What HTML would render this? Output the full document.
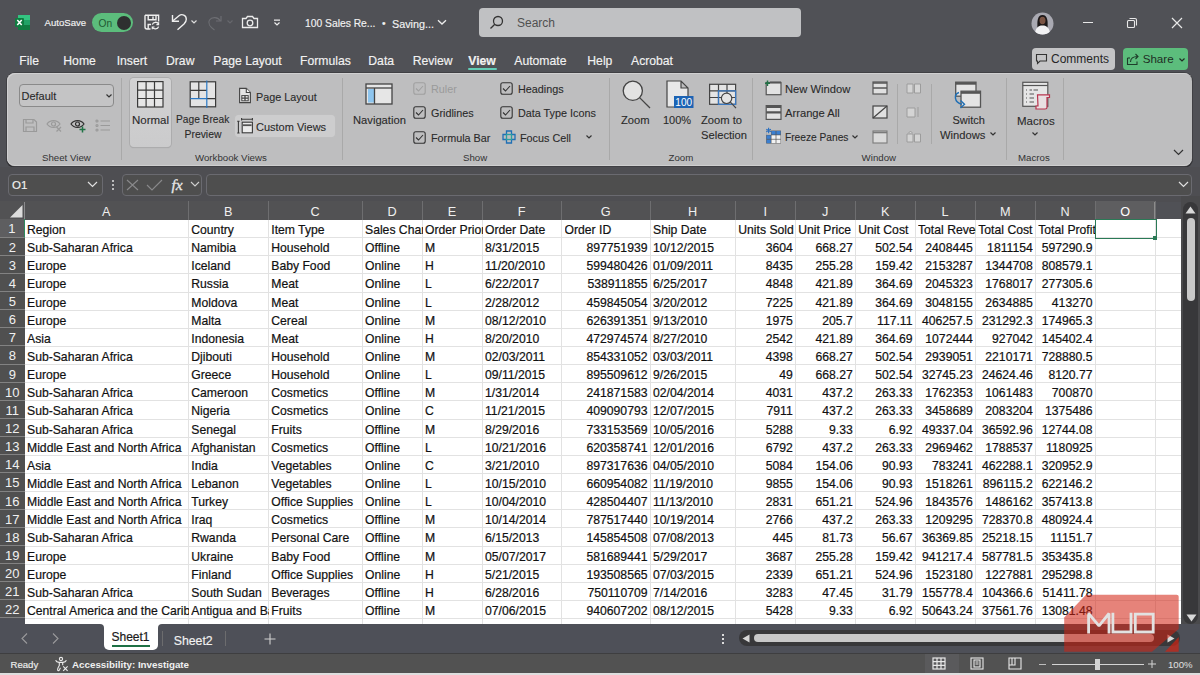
<!DOCTYPE html>
<html><head><meta charset="utf-8">
<style>
*{box-sizing:border-box;margin:0;padding:0}
html,body{width:1200px;height:675px;overflow:hidden;background:#505156;font-family:"Liberation Sans",sans-serif}
.a{position:absolute}
.t{position:absolute;white-space:nowrap;line-height:1}
/* title bar */
#title{left:0;top:0;width:1200px;height:46px;background:#505156}
.wt{color:#f2f2f2;-webkit-text-stroke:0.15px #f2f2f2}
/* ribbon */
#ribbon{left:7px;top:73px;width:1185px;height:93px;background:#bebebf;border-radius:8px;box-shadow:0 0 0 1px #404044, 0 1px 0 1px #2e2e30, inset 1px 1px 0 #d0d0d1, inset 0 -1px 0 #cfcfcf}
.rt{color:#2a2a2a;font-size:11px;-webkit-text-stroke:0.1px #2a2a2a}
.sep{position:absolute;width:1px;background:#a9a9a9}
.gl{color:#333;font-size:9.7px}
/* formula bar */
#fbar{left:0;top:167px;width:1200px;height:35px;background:#4e4e52}
.box{position:absolute;border:1px solid #6a6a70;border-radius:4px;background:#4e4e4e}
/* grid */
#gridbg{left:24.5px;top:219.25px;width:1156.5px;height:405px;background:#fff}
.hl{position:absolute;left:24.5px;width:1156.5px;height:1px;background:#e2e2e2}
.vl{position:absolute;top:219px;width:1px;height:405px;background:#e2e2e2}
.c{position:absolute;height:18.16px;font-size:12.2px;line-height:18px;color:#111;white-space:nowrap;overflow:hidden;padding-top:1.6px;-webkit-text-stroke:0.2px #111}
.c.r{text-align:right}
.ch{position:absolute;top:201px;height:18.5px;background:#525254;color:#f0f0f0;font-size:12.7px;line-height:18px;padding-top:1.6px;text-align:center;border-right:1px solid #6e6e70}
.ch.sel{background:#5e5e60;border-bottom:1.5px solid #2a7a56;color:#fff}
.rh{position:absolute;left:0;width:24.5px;height:18.16px;background:#505050;color:#f0f0f0;font-size:13px;line-height:18px;padding-top:1px;text-align:center;border-bottom:1px solid #828282}
.rh.sel{background:#5e5e60;border-right:1.5px solid #2d8a5c}
</style></head><body>
<div id="title" class="a"></div>

<!-- Excel logo -->
<svg class="a" style="left:14px;top:14px" width="17" height="17" viewBox="0 0 17 17">
  <rect x="4" y="1" width="12" height="15" rx="1" fill="#1f9d55"/>
  <rect x="4" y="1" width="12" height="5" fill="#33c481"/>
  <rect x="4" y="6" width="12" height="5" fill="#21a366"/>
  <rect x="4" y="11" width="12" height="5" fill="#107c41"/>
  <rect x="1" y="4" width="9" height="9" rx="1" fill="#107c41"/>
  <path d="M3.3 6 L7.7 11 M7.7 6 L3.3 11" stroke="#fff" stroke-width="1.5"/>
</svg>
<div class="t wt" style="left:44.5px;top:18px;font-size:9.6px">AutoSave</div>
<!-- toggle -->
<div class="a" style="left:92px;top:13px;width:41px;height:19px;border-radius:10px;background:#5cbd7c"></div>
<div class="a" style="left:116.5px;top:15.5px;width:14px;height:14px;border-radius:7px;background:#2e2f30"></div>
<div class="t" style="left:98.5px;top:19px;font-size:10.2px;color:#1f5a33">On</div>
<!-- save icon -->
<svg class="a" style="left:140px;top:10px" width="25" height="25" viewBox="140 10 25 25" fill="none" stroke="#efefef" stroke-width="1.4">
  <path d="M145 15.2 H158.6 V21.5"/>
  <path d="M145 15.2 V27 Q145 29 147 29 H150.5"/>
  <path d="M148.2 15.2 V19.8 H156 V15.2 M153 16.5 V19"/>
  <path d="M148.2 29 V24.5 H151"/>
  <path d="M152.3 24.6 A3.4 3.4 0 0 1 158.5 24 M158.6 26.6 A3.4 3.4 0 0 1 152.4 27.2" stroke-width="1.3"/>
  <path d="M158.6 22.3 V24.6 H156.4 M152.3 29.3 V27 H154.5" stroke-width="1.2"/>
</svg>
<!-- undo -->
<svg class="a" style="left:168px;top:10px" width="22" height="23" viewBox="168 10 22 23" fill="none" stroke="#efefef" stroke-width="1.4">
  <path d="M172.5 15 V21.2 H179"/>
  <path d="M173 20.8 L179 15.8 C182 13.3 186.3 15.3 186.3 19.2 C186.3 21.2 185.3 22.6 184 24 L177.5 29.8"/>
</svg>
<svg class="a" style="left:190px;top:19px" width="8" height="6" viewBox="0 0 8 6" fill="none" stroke="#dcdcdc" stroke-width="1.2"><path d="M1.5 1.5 L4 4 L6.5 1.5"/></svg>
<!-- redo disabled -->
<svg class="a" style="left:205px;top:13px" width="18" height="18" viewBox="0 0 18 18" fill="none" stroke="#6c6d72" stroke-width="1.2">
  <path d="M16 3 V8 H11"/><path d="M15.5 8 C13 4 7 3.5 4.5 7 C2.5 10 5 14 9.5 17"/>
</svg>
<svg class="a" style="left:226px;top:19px" width="8" height="6" viewBox="0 0 8 6" fill="none" stroke="#66676c" stroke-width="1.2"><path d="M1.5 1.5 L4 4 L6.5 1.5"/></svg>
<!-- camera -->
<svg class="a" style="left:241px;top:15px" width="18" height="14" viewBox="0 0 18 14" fill="none" stroke="#ececec" stroke-width="1.3">
  <path d="M1.5 3.5 H5 L6.5 1.5 H11.5 L13 3.5 H16.5 V12.5 H1.5 Z"/><circle cx="9" cy="8" r="2.8"/>
</svg>
<svg class="a" style="left:273px;top:19px" width="8" height="8" viewBox="0 0 8 8" fill="none" stroke="#ececec" stroke-width="1.2"><path d="M1 1.2 H7 M1.5 3.5 L4 6 L6.5 3.5"/></svg>
<div class="t wt" style="left:305px;top:18.5px;font-size:10.3px">100 Sales Re...</div>
<div class="t wt" style="left:382px;top:18.5px;font-size:10.3px">•</div>
<div class="t wt" style="left:392px;top:18.5px;font-size:10.8px">Saving...</div>
<svg class="a" style="left:437px;top:19px" width="10" height="7" viewBox="0 0 10 7" fill="none" stroke="#ececec" stroke-width="1.3"><path d="M1 1.2 L5 5 L9 1.2"/></svg>
<!-- search -->
<div class="a" style="left:479px;top:8px;width:322px;height:29px;background:#c0c1c3;border-radius:4px"></div>
<svg class="a" style="left:489px;top:15px" width="15" height="15" viewBox="0 0 15 15" fill="none" stroke="#333" stroke-width="1.3">
  <circle cx="9" cy="6" r="4.5"/><path d="M5.8 9.2 L1.5 13.5"/>
</svg>
<div class="t" style="left:517px;top:17px;font-size:12px;color:#505050">Search</div>
<!-- avatar -->
<svg class="a" style="left:1031px;top:11.5px" width="23" height="23" viewBox="0 0 23 23">
  <defs><clipPath id="av"><circle cx="11.5" cy="11.5" r="11"/></clipPath></defs>
  <g clip-path="url(#av)">
    <rect width="23" height="23" fill="#a9a9b2"/>
    <path d="M6.5 16 C6 9 6.5 3 11.5 3 C16.5 3 17 9 16.5 16 Z" fill="#1c1819"/>
    <ellipse cx="11.5" cy="8.5" rx="3" ry="3.8" fill="#7a5444"/>
    <path d="M4 23 C4 16 7 13.5 11.5 13.5 C16 13.5 19 16 19 23 Z" fill="#f2f2f4"/>
  </g>
</svg>
<!-- window controls -->
<div class="a" style="left:1083px;top:22px;width:10px;height:1px;background:#e8e8e8"></div>
<svg class="a" style="left:1126px;top:17px" width="12" height="12" viewBox="0 0 12 12" fill="none" stroke="#e8e8e8" stroke-width="1.1">
  <rect x="1.5" y="3.5" width="7" height="7" rx="1"/><path d="M3.5 1.5 H9 a1.5 1.5 0 0 1 1.5 1.5 V8.5"/>
</svg>
<svg class="a" style="left:1171px;top:17px" width="12" height="12" viewBox="0 0 12 12" fill="none" stroke="#e8e8e8" stroke-width="1.2"><path d="M1 1 L11 11 M11 1 L1 11"/></svg>

<!-- menu tabs -->
<div class="t wt" style="left:19.3px;top:55px;font-size:12.2px">File</div>
<div class="t wt" style="left:63.3px;top:55px;font-size:12.2px">Home</div>
<div class="t wt" style="left:116.7px;top:55px;font-size:12.2px">Insert</div>
<div class="t wt" style="left:166px;top:55px;font-size:12.2px">Draw</div>
<div class="t wt" style="left:213.3px;top:55px;font-size:12.2px">Page Layout</div>
<div class="t wt" style="left:300px;top:55px;font-size:12.2px">Formulas</div>
<div class="t wt" style="left:368.3px;top:55px;font-size:12.2px">Data</div>
<div class="t wt" style="left:412.7px;top:55px;font-size:12.2px">Review</div>
<div class="t wt" style="left:468.3px;top:55px;font-size:12.2px;font-weight:bold">View</div>
<div class="a" style="left:468px;top:68px;width:29px;height:2px;background:#62cdb6;border-radius:1px"></div>
<div class="t wt" style="left:514.3px;top:55px;font-size:12.2px">Automate</div>
<div class="t wt" style="left:587.3px;top:55px;font-size:12.2px">Help</div>
<div class="t wt" style="left:631px;top:55px;font-size:12.2px">Acrobat</div>
<!-- comments / share -->
<div class="a" style="left:1032px;top:48px;width:83px;height:22px;background:#c4c4c6;border-radius:4px"></div>
<svg class="a" style="left:1035px;top:53px" width="13" height="12" viewBox="0 0 13 12" fill="none" stroke="#333" stroke-width="1.1"><path d="M1.5 1.5 H11.5 V8 H5 L2.5 10.5 V8 H1.5 Z"/></svg>
<div class="t" style="left:1051px;top:53px;font-size:12px;color:#262626">Comments</div>
<div class="a" style="left:1123px;top:48px;width:65px;height:22px;background:#5cbd7c;border-radius:4px"></div>
<svg class="a" style="left:1126px;top:52px" width="14" height="14" viewBox="0 0 14 14" fill="none" stroke="#1e3d2a" stroke-width="1.1"><path d="M1.5 6 V12.5 H11 V9.5"/><path d="M1.5 6 H4"/><path d="M4.5 10 C4.5 6.5 7 4.5 11.5 4.5 M9.5 2 L12 4.5 L9.5 7"/></svg>
<div class="t" style="left:1142.7px;top:53px;font-size:11.6px;color:#1e2e24">Share</div>
<svg class="a" style="left:1178px;top:57px" width="8" height="6" viewBox="0 0 8 6" fill="none" stroke="#1e2e24" stroke-width="1.2"><path d="M1.5 1.5 L4 4 L6.5 1.5"/></svg>

<!-- ribbon -->
<div id="ribbon" class="a"></div>
<!-- sheet view group -->
<div class="a" style="left:19px;top:84px;width:95px;height:22.5px;border:1px solid #8a8a8a;border-radius:4px;background:#c4c4c5"></div>
<div class="t rt" style="left:21.5px;top:91px;font-size:11px">Default</div>
<svg class="a" style="left:105px;top:93px" width="8" height="6" viewBox="0 0 8 6" fill="none" stroke="#333" stroke-width="1.2"><path d="M1.5 1.5 L4 4 L6.5 1.5"/></svg>
<svg class="a" style="left:22px;top:118px" width="16" height="15" viewBox="0 0 16 15" fill="none" stroke="#9a9a9a" stroke-width="1.2"><path d="M1.5 1.5 H12 L14.5 4 V13.5 H1.5 Z"/><path d="M4 1.5 V5 H11 V1.5 M4 13.5 V9 H12 V13.5"/></svg>
<svg class="a" style="left:46px;top:118px" width="17" height="15" viewBox="0 0 17 15" fill="none" stroke="#9a9a9a" stroke-width="1.2"><path d="M1 6 C4 1.5 11 1.5 14 6 C11 10.5 4 10.5 1 6 Z"/><circle cx="7.5" cy="6" r="2"/><path d="M10.5 9 L15 13.5 M15 9 L10.5 13.5"/></svg>
<svg class="a" style="left:70px;top:118px" width="17" height="15" viewBox="0 0 17 15" fill="none" stroke="#2f2f2f" stroke-width="1.2"><path d="M1 6 C4 1.5 11 1.5 14 6 C11 10.5 4 10.5 1 6 Z"/><circle cx="7.5" cy="6" r="2"/><path d="M12.5 8.5 V14.5 M9.5 11.5 H15.5" stroke="#217346" stroke-width="1.5"/></svg>
<svg class="a" style="left:95px;top:118px" width="16" height="15" viewBox="0 0 16 15" fill="none" stroke="#9a9a9a" stroke-width="1.2"><path d="M5.5 3 H15 M5.5 7.5 H15 M5.5 12 H15"/><circle cx="2" cy="3" r="1"/><circle cx="2" cy="7.5" r="1"/><circle cx="2" cy="12" r="1"/></svg>
<div class="t gl" style="left:42px;top:153px">Sheet View</div>
<div class="sep" style="left:121px;top:78px;height:82px"></div>

<!-- workbook views -->
<div class="a" style="left:130px;top:77.5px;width:40.5px;height:69.5px;background:linear-gradient(#d2d2d3,#cbcbcc);border-radius:4px;box-shadow:0 0 0 1px #acacad, 0 1px 1px #a0a0a0"></div>
<svg class="a" style="left:135px;top:79px" width="31" height="31" viewBox="135 79 31 31" fill="none" stroke="#3a3a3a" stroke-width="1.2">
  <rect x="137.6" y="81.6" width="25.4" height="25.4" fill="#e6e6e6"/>
  <path d="M146.1 81.6 V107 M154.5 81.6 V107 M137.6 90.1 H163 M137.6 98.5 H163"/>
</svg>
<div class="t rt" style="left:132px;top:115px;font-size:11.5px">Normal</div>
<svg class="a" style="left:187px;top:79px" width="32" height="31" viewBox="187 79 32 31" fill="none" stroke="#3a3a3a" stroke-width="1.2">
  <rect x="190.2" y="81.8" width="25.4" height="25" fill="#e4e4e4"/>
  <path d="M198.8 81.8 V98.6 M190.2 90.4 H206.8 M206.8 98.6 H215.6"/>
  <path d="M190.2 98.6 H206.8 M206.8 80.5 V108" stroke="#2a78c4" stroke-width="1.2"/>
</svg>
<div class="t rt" style="left:176px;top:115px;font-size:10.2px">Page Break</div>
<div class="t rt" style="left:184.5px;top:130px;font-size:10.4px">Preview</div>
<svg class="a" style="left:237px;top:86px" width="16" height="19" viewBox="237 86 16 19" fill="none" stroke="#444" stroke-width="1.1">
  <path d="M239.6 88.4 H246.3 L250.4 92.5 V102.6 H239.6 Z" fill="#e4e4e4"/>
  <path d="M246.3 88.4 V92.5 H250.4" fill="#f2f2f2"/>
  <rect x="241.8" y="95.6" width="6.4" height="5.2" fill="#f0f0f0" stroke-width="1"/>
  <path d="M245 95.6 V100.8 M241.8 98.2 H248.2" stroke-width="1.3"/>
</svg>
<div class="t rt" style="left:256px;top:92px;font-size:10.8px">Page Layout</div>
<div class="a" style="left:234.5px;top:114.5px;width:100.5px;height:22.5px;background:#cdcdce;border-radius:4px;box-shadow:0 0 1px #c8c8c8"></div>
<svg class="a" style="left:235px;top:116px" width="20" height="19" viewBox="235 116 20 19" fill="none" stroke="#3a3a3a" stroke-width="1.1">
  <path d="M238.4 121.3 V133 M237.2 121.3 H239.6 M237.2 133 H239.6"/>
  <path d="M241.6 119.3 H252.4 M241.6 118.1 V120.5 M252.4 118.1 V120.5"/>
  <rect x="242.2" y="122.2" width="10.2" height="10.6" fill="#ececec"/>
  <path d="M243 125.2 H251.6" stroke-width="1.8" stroke="#555"/>
</svg>
<div class="t rt" style="left:256px;top:122px;font-size:11px">Custom Views</div>
<div class="t gl" style="left:195px;top:153px">Workbook Views</div>
<div class="sep" style="left:342px;top:78px;height:82px"></div>

<!-- navigation -->
<svg class="a" style="left:365px;top:83px" width="28" height="22" viewBox="0 0 28 22" fill="#e6e6e6" stroke="#444" stroke-width="1.3"><rect x="1" y="1" width="26" height="20"/><path d="M1 5 H27"/><rect x="3" y="6" width="6" height="13.5" fill="#8ec5ee" stroke="none"/><path d="M9.5 5 V21"/></svg>
<div class="t rt" style="left:353px;top:115px;font-size:11.2px">Navigation</div>

<!-- show group -->
<svg class="a" style="left:413px;top:82px" width="13" height="13" viewBox="0 0 13 13" fill="none" stroke="#a0a0a0" stroke-width="1.1"><rect x="0.8" y="0.8" width="11.4" height="11.4" rx="2"/><path d="M3 6.5 L5.5 9 L10 4"/></svg>
<div class="t" style="left:431px;top:84px;font-size:10.8px;color:#9a9a9a">Ruler</div>
<svg class="a" style="left:413px;top:106px" width="13" height="13" viewBox="0 0 13 13" fill="none" stroke="#333" stroke-width="1.1"><rect x="0.8" y="0.8" width="11.4" height="11.4" rx="2"/><path d="M3 6.5 L5.5 9 L10 4"/></svg>
<div class="t rt" style="left:431px;top:108px;font-size:10.8px">Gridlines</div>
<svg class="a" style="left:413px;top:131px" width="13" height="13" viewBox="0 0 13 13" fill="none" stroke="#333" stroke-width="1.1"><rect x="0.8" y="0.8" width="11.4" height="11.4" rx="2"/><path d="M3 6.5 L5.5 9 L10 4"/></svg>
<div class="t rt" style="left:431px;top:133px;font-size:10.8px">Formula Bar</div>
<svg class="a" style="left:500px;top:82px" width="13" height="13" viewBox="0 0 13 13" fill="none" stroke="#333" stroke-width="1.1"><rect x="0.8" y="0.8" width="11.4" height="11.4" rx="2"/><path d="M3 6.5 L5.5 9 L10 4"/></svg>
<div class="t rt" style="left:518px;top:84px;font-size:10.8px">Headings</div>
<svg class="a" style="left:500px;top:106px" width="13" height="13" viewBox="0 0 13 13" fill="none" stroke="#333" stroke-width="1.1"><rect x="0.8" y="0.8" width="11.4" height="11.4" rx="2"/><path d="M3 6.5 L5.5 9 L10 4"/></svg>
<div class="t rt" style="left:518px;top:108px;font-size:10.8px">Data Type Icons</div>
<svg class="a" style="left:502px;top:130px" width="14" height="14" viewBox="0 0 14 14" fill="none" stroke="#1f6fb5" stroke-width="1.3"><path d="M4.5 1 H9.5 V4.5 H13 V9.5 H9.5 V13 H4.5 V9.5 H1 V4.5 H4.5 Z"/><rect x="4.5" y="4.5" width="5" height="5" stroke="#2aa0a0"/></svg>
<div class="t rt" style="left:520px;top:133px;font-size:10.8px">Focus Cell</div>
<svg class="a" style="left:585px;top:134px" width="8" height="6" viewBox="0 0 8 6" fill="none" stroke="#333" stroke-width="1.2"><path d="M1.5 1.5 L4 4 L6.5 1.5"/></svg>
<div class="t gl" style="left:463px;top:153px">Show</div>
<div class="sep" style="left:609px;top:78px;height:82px"></div>

<!-- zoom group -->
<svg class="a" style="left:615px;top:76px" width="40" height="36" viewBox="615 76 40 36" fill="#e2e2e2" stroke="#444" stroke-width="1.3"><circle cx="632.8" cy="90.8" r="9.6"/><path d="M639.6 97.6 L650 108" fill="none"/></svg>
<div class="t rt" style="left:621px;top:115px;font-size:11.2px">Zoom</div>
<svg class="a" style="left:665px;top:80px" width="29" height="29" viewBox="0 0 29 29" fill="#e8e8e8" stroke="#444" stroke-width="1.2"><path d="M2 1 H16 L23 8 V27 H2 Z M16 1 V8 H23"/><rect x="9" y="16" width="19.5" height="12" fill="#1c63b4" stroke="none"/><text x="18.7" y="26" font-family="Liberation Sans" font-size="10" fill="#fff" stroke="none" text-anchor="middle">100</text></svg>
<div class="t rt" style="left:663px;top:115px;font-size:11px">100%</div>
<svg class="a" style="left:705px;top:80px" width="36" height="32" viewBox="705 80 36 32" fill="none" stroke="#444" stroke-width="1.2">
  <rect x="709.6" y="84.3" width="26" height="20" fill="#e4e4e4"/>
  <path d="M709.6 90.8 H735.6 M709.6 97.5 H735.6 M718.5 84.3 V104.3 M727 84.3 V104.3"/>
  <path d="M718.5 90.8 H735.6 V104.3 H718.5 Z" stroke="#3a78c0" stroke-width="1.3"/>
  <circle cx="726.6" cy="98.3" r="5.2" fill="#e4e4e4"/>
  <path d="M730.4 102.1 L736 108.2"/>
</svg>
<div class="t rt" style="left:701px;top:115px;font-size:11.2px">Zoom to</div>
<div class="t rt" style="left:701px;top:130px;font-size:11.2px">Selection</div>
<div class="t gl" style="left:668.5px;top:153px">Zoom</div>
<div class="sep" style="left:752px;top:78px;height:82px"></div>

<!-- window group -->
<svg class="a" style="left:763px;top:79px" width="22" height="18" viewBox="763 79 22 18" fill="none" stroke="#555" stroke-width="1.2">
  <rect x="766.2" y="82.5" width="14.8" height="12.2" fill="#e2e2e2"/>
  <path d="M770 82.5 H781" stroke-width="2"/>
  <path d="M767.5 80.5 V86 M765 83.2 H770" stroke="#217346" stroke-width="1.4"/>
</svg>
<div class="t rt" style="left:785px;top:84px;font-size:11.2px">New Window</div>
<svg class="a" style="left:763px;top:103px" width="22" height="18" viewBox="763 103 22 18" fill="none" stroke="#555" stroke-width="1.2">
  <rect x="766.2" y="105.6" width="14.8" height="13.8" fill="#e2e2e2"/>
  <path d="M766.2 107 H781 M766.2 112.3 H781" stroke-width="2.2"/>
</svg>
<div class="t rt" style="left:785px;top:108px;font-size:11.2px">Arrange All</div>
<svg class="a" style="left:763px;top:127px" width="22" height="19" viewBox="763 127 22 19">
  <rect x="766.2" y="130.6" width="14.700000000000001" height="12.899999999999999" fill="#555"/>
  <rect x="766.2" y="130.6" width="4.9" height="4.3" fill="#bebebf"/>
  <rect x="771.45" y="130.95" width="4.20" height="3.60" fill="#3b7fd0"/><rect x="776.35" y="130.95" width="4.20" height="3.60" fill="#3b7fd0"/><rect x="766.55" y="135.25" width="4.20" height="3.60" fill="#3b7fd0"/><rect x="771.45" y="135.25" width="4.20" height="3.60" fill="#f2f2f2"/><rect x="776.35" y="135.25" width="4.20" height="3.60" fill="#f2f2f2"/><rect x="766.55" y="139.55" width="4.20" height="3.60" fill="#3b7fd0"/><rect x="771.45" y="139.55" width="4.20" height="3.60" fill="#f2f2f2"/><rect x="776.35" y="139.55" width="4.20" height="3.60" fill="#f2f2f2"/>
  <path d="M768.6 127.8 V133.2 M766.3 129.2 L770.9 131.8 M770.9 129.2 L766.3 131.8" stroke="#2a6fc0" stroke-width="1.1"/>
</svg>
<div class="t rt" style="left:785px;top:133px;font-size:10.2px">Freeze Panes</div>
<svg class="a" style="left:851px;top:134px" width="8" height="6" viewBox="0 0 8 6" fill="none" stroke="#333" stroke-width="1.2"><path d="M1.5 1.5 L4 4 L6.5 1.5"/></svg>
<svg class="a" style="left:872px;top:81px" width="16" height="14" viewBox="0 0 16 14" fill="#e0e0e0" stroke="#555" stroke-width="1.2"><rect x="1" y="1" width="14" height="12"/><path d="M1 2 H15 M1 7 H15" stroke-width="1.7"/></svg>
<svg class="a" style="left:872px;top:105px" width="16" height="14" viewBox="0 0 16 14" fill="#e0e0e0" stroke="#444" stroke-width="1.2"><rect x="1" y="1" width="14" height="12"/><path d="M1 13 L15 1"/></svg>
<svg class="a" style="left:872px;top:130px" width="16" height="14" viewBox="0 0 16 14" fill="#dadada" stroke="#7a7a7a" stroke-width="1.1"><rect x="1" y="1" width="14" height="12"/><path d="M1 2.5 H15" stroke-width="1.6"/></svg>
<div class="sep" style="left:897px;top:84px;height:60px"></div>
<svg class="a" style="left:906px;top:82px" width="16" height="12" viewBox="0 0 16 12" fill="#d4d4d4" stroke="#9c9c9c" stroke-width="1"><path d="M1 2 H7 V11 H1 Z M8.5 2 H14.5 V11 H8.5 Z"/></svg>
<svg class="a" style="left:906px;top:106px" width="16" height="12" viewBox="0 0 16 12" fill="#d4d4d4" stroke="#9c9c9c" stroke-width="1"><path d="M1 2 H9 V11 H1 Z M12 1 V11"/></svg>
<svg class="a" style="left:906px;top:130px" width="16" height="13" viewBox="0 0 16 13" fill="#d4d4d4" stroke="#9c9c9c" stroke-width="1"><path d="M1 4 H7 V12 H1 Z M8.5 4 H14.5 V12 H8.5 Z M3 3 C3 1 6 1 6 3"/></svg>
<div class="sep" style="left:931px;top:84px;height:60px"></div>
<svg class="a" style="left:950px;top:78px" width="36" height="34" viewBox="950 78 36 34">
  <rect x="955.7" y="82.2" width="20.3" height="14" fill="#e4e4e4" stroke="#555" stroke-width="1.3"/>
  <path d="M955.7 83.5 H976" stroke="#555" stroke-width="2.4"/>
  <rect x="961" y="91.2" width="19.5" height="16" fill="#e4e4e4" stroke="#555" stroke-width="1.3"/>
  <path d="M961 92.6 H980.5" stroke="#555" stroke-width="2.4"/>
  <path d="M959 92.5 C954 94 953.5 102 962 104.3" fill="none" stroke="#1f6fb5" stroke-width="1.4"/>
  <path d="M960.5 100.5 L964.5 104.3 L960.5 108" fill="none" stroke="#1f6fb5" stroke-width="1.4"/>
</svg>
<div class="t rt" style="left:952.5px;top:115px;font-size:11px">Switch</div>
<div class="t rt" style="left:940px;top:130px;font-size:11.2px">Windows</div>
<svg class="a" style="left:989px;top:131px" width="8" height="6" viewBox="0 0 8 6" fill="none" stroke="#333" stroke-width="1.2"><path d="M1.5 1.5 L4 4 L6.5 1.5"/></svg>
<div class="t gl" style="left:861.6px;top:153px">Window</div>
<div class="sep" style="left:1006px;top:78px;height:82px"></div>

<!-- macros -->
<svg class="a" style="left:1020px;top:80px" width="33" height="31" viewBox="1020 80 33 31">
  <rect x="1022.8" y="82.3" width="25" height="24" fill="#e6e6e6" stroke="#555" stroke-width="1.2"/>
  <path d="M1022.8 85.5 H1047.8" stroke="#555" stroke-width="1.2"/>
  <g stroke="#555" stroke-width="1.2"><path d="M1026 90 H1027 M1029.5 90 H1032 M1033.5 90 H1038 M1026 94 H1027 M1029.5 94 H1034 M1026 98 H1027 M1029.5 98 H1034 M1026 102 H1027 M1029.5 102 H1034"/></g>
  <path d="M1037.5 94.8 H1049.5 V97.5 H1047 V107.5 C1047 108.5 1046 109 1045 109 H1036 V106 H1038 Z" fill="#e8e0e2" stroke="#b8344e" stroke-width="1.2"/>
</svg>
<div class="t rt" style="left:1017px;top:116px;font-size:11.5px">Macros</div>
<svg class="a" style="left:1031px;top:131px" width="8" height="6" viewBox="0 0 8 6" fill="none" stroke="#333" stroke-width="1.2"><path d="M1.5 1.5 L4 4 L6.5 1.5"/></svg>
<div class="t gl" style="left:1018px;top:153px">Macros</div>
<div class="sep" style="left:1063px;top:78px;height:82px"></div>
<svg class="a" style="left:1173px;top:149px" width="11" height="7" viewBox="0 0 11 7" fill="none" stroke="#333" stroke-width="1.2"><path d="M1 1 L5.5 5.5 L10 1"/></svg>

<!-- formula bar -->
<div id="fbar" class="a"></div>
<div class="box" style="left:7.5px;top:174px;width:95px;height:21.5px"></div>
<div class="t wt" style="left:12px;top:179.5px;font-size:11.5px">O1</div>
<svg class="a" style="left:87px;top:181px" width="11" height="7" viewBox="0 0 11 7" fill="none" stroke="#e0e0e0" stroke-width="1.2"><path d="M1 1 L5.5 5.5 L10 1"/></svg>
<div class="a" style="left:111.5px;top:180px;width:2px;height:2px;background:#e0e0e0;border-radius:1px"></div>
<div class="a" style="left:111.5px;top:184px;width:2px;height:2px;background:#e0e0e0;border-radius:1px"></div>
<div class="a" style="left:111.5px;top:188px;width:2px;height:2px;background:#e0e0e0;border-radius:1px"></div>
<div class="box" style="left:121.5px;top:174px;width:80px;height:21.5px"></div>
<svg class="a" style="left:126px;top:179px" width="13" height="12" viewBox="0 0 13 12" fill="none" stroke="#8a8a8c" stroke-width="1.1"><path d="M1 1 L12 11 M12 1 L1 11"/></svg>
<svg class="a" style="left:146px;top:179px" width="17" height="12" viewBox="0 0 17 12" fill="none" stroke="#8a8a8c" stroke-width="1.1"><path d="M1 6 L6 11 L16 1"/></svg>
<div class="t" style="left:171.5px;top:176.5px;font-size:15.5px;color:#e8e8e8;font-family:'Liberation Serif',serif;font-style:italic;-webkit-text-stroke:0.3px #e8e8e8">fx</div>
<svg class="a" style="left:190px;top:181px" width="10" height="7" viewBox="0 0 10 7" fill="none" stroke="#d0d0d0" stroke-width="1.1"><path d="M1 1 L5 5 L9 1"/></svg>
<div class="box" style="left:205.5px;top:174px;width:986.5px;height:21.5px"></div>
<svg class="a" style="left:1178px;top:181px" width="11" height="7" viewBox="0 0 11 7" fill="none" stroke="#e0e0e0" stroke-width="1.2"><path d="M1 1 L5.5 5.5 L10 1"/></svg>

<!-- grid -->
<div id="gridbg" class="a"></div>
<div class="hl" style="top:237px"></div>
<div class="hl" style="top:255px"></div>
<div class="hl" style="top:273px"></div>
<div class="hl" style="top:292px"></div>
<div class="hl" style="top:310px"></div>
<div class="hl" style="top:328px"></div>
<div class="hl" style="top:346px"></div>
<div class="hl" style="top:364px"></div>
<div class="hl" style="top:382px"></div>
<div class="hl" style="top:400px"></div>
<div class="hl" style="top:419px"></div>
<div class="hl" style="top:437px"></div>
<div class="hl" style="top:455px"></div>
<div class="hl" style="top:473px"></div>
<div class="hl" style="top:491px"></div>
<div class="hl" style="top:509px"></div>
<div class="hl" style="top:527px"></div>
<div class="hl" style="top:546px"></div>
<div class="hl" style="top:564px"></div>
<div class="hl" style="top:582px"></div>
<div class="hl" style="top:600px"></div>
<div class="hl" style="top:618px"></div>
<div class="hl" style="top:636px"></div>
<div class="vl" style="left:188px"></div>
<div class="vl" style="left:268px"></div>
<div class="vl" style="left:362px"></div>
<div class="vl" style="left:422px"></div>
<div class="vl" style="left:482px"></div>
<div class="vl" style="left:561px"></div>
<div class="vl" style="left:650px"></div>
<div class="vl" style="left:735px"></div>
<div class="vl" style="left:795px"></div>
<div class="vl" style="left:855px"></div>
<div class="vl" style="left:915px"></div>
<div class="vl" style="left:975px"></div>
<div class="vl" style="left:1035px"></div>
<div class="vl" style="left:1095px"></div>
<div class="vl" style="left:1155px"></div>
<div class="c" style="left:27px;top:219.4px;width:161.75px">Region</div>
<div class="c" style="left:191.25px;top:219.4px;width:77.5px">Country</div>
<div class="c" style="left:271.25px;top:219.4px;width:91.25px">Item Type</div>
<div class="c" style="left:365px;top:219.4px;width:57.5px">Sales Channel</div>
<div class="c" style="left:425px;top:219.4px;width:57.5px">Order Priority</div>
<div class="c" style="left:485px;top:219.4px;width:77px">Order Date</div>
<div class="c" style="left:564.5px;top:219.4px;width:86px">Order ID</div>
<div class="c" style="left:653px;top:219.4px;width:82.75px">Ship Date</div>
<div class="c" style="left:738.25px;top:219.4px;width:57.5px">Units Sold</div>
<div class="c" style="left:798.25px;top:219.4px;width:57.5px">Unit Price</div>
<div class="c" style="left:858.25px;top:219.4px;width:57.25px">Unit Cost</div>
<div class="c" style="left:918px;top:219.4px;width:57.75px">Total Revenue</div>
<div class="c" style="left:978.25px;top:219.4px;width:57.5px">Total Cost</div>
<div class="c" style="left:1038.25px;top:219.4px;width:57.25px">Total Profit</div>
<div class="c" style="left:27px;top:237.54px;width:161.75px">Sub-Saharan Africa</div>
<div class="c" style="left:191.25px;top:237.54px;width:77.5px">Namibia</div>
<div class="c" style="left:271.25px;top:237.54px;width:91.25px">Household</div>
<div class="c" style="left:365px;top:237.54px;width:57.5px">Offline</div>
<div class="c" style="left:425px;top:237.54px;width:57.5px">M</div>
<div class="c" style="left:485px;top:237.54px;width:77px">8/31/2015</div>
<div class="c r" style="left:562px;top:237.54px;width:85.5px">897751939</div>
<div class="c" style="left:653px;top:237.54px;width:82.75px">10/12/2015</div>
<div class="c r" style="left:735.75px;top:237.54px;width:57px">3604</div>
<div class="c r" style="left:795.75px;top:237.54px;width:57px">668.27</div>
<div class="c r" style="left:855.75px;top:237.54px;width:56.75px">502.54</div>
<div class="c r" style="left:915.5px;top:237.54px;width:57.25px">2408445</div>
<div class="c r" style="left:975.75px;top:237.54px;width:57px">1811154</div>
<div class="c r" style="left:1035.75px;top:237.54px;width:56.75px">597290.9</div>
<div class="c" style="left:27px;top:255.68px;width:161.75px">Europe</div>
<div class="c" style="left:191.25px;top:255.68px;width:77.5px">Iceland</div>
<div class="c" style="left:271.25px;top:255.68px;width:91.25px">Baby Food</div>
<div class="c" style="left:365px;top:255.68px;width:57.5px">Online</div>
<div class="c" style="left:425px;top:255.68px;width:57.5px">H</div>
<div class="c" style="left:485px;top:255.68px;width:77px">11/20/2010</div>
<div class="c r" style="left:562px;top:255.68px;width:85.5px">599480426</div>
<div class="c" style="left:653px;top:255.68px;width:82.75px">01/09/2011</div>
<div class="c r" style="left:735.75px;top:255.68px;width:57px">8435</div>
<div class="c r" style="left:795.75px;top:255.68px;width:57px">255.28</div>
<div class="c r" style="left:855.75px;top:255.68px;width:56.75px">159.42</div>
<div class="c r" style="left:915.5px;top:255.68px;width:57.25px">2153287</div>
<div class="c r" style="left:975.75px;top:255.68px;width:57px">1344708</div>
<div class="c r" style="left:1035.75px;top:255.68px;width:56.75px">808579.1</div>
<div class="c" style="left:27px;top:273.82px;width:161.75px">Europe</div>
<div class="c" style="left:191.25px;top:273.82px;width:77.5px">Russia</div>
<div class="c" style="left:271.25px;top:273.82px;width:91.25px">Meat</div>
<div class="c" style="left:365px;top:273.82px;width:57.5px">Online</div>
<div class="c" style="left:425px;top:273.82px;width:57.5px">L</div>
<div class="c" style="left:485px;top:273.82px;width:77px">6/22/2017</div>
<div class="c r" style="left:562px;top:273.82px;width:85.5px">538911855</div>
<div class="c" style="left:653px;top:273.82px;width:82.75px">6/25/2017</div>
<div class="c r" style="left:735.75px;top:273.82px;width:57px">4848</div>
<div class="c r" style="left:795.75px;top:273.82px;width:57px">421.89</div>
<div class="c r" style="left:855.75px;top:273.82px;width:56.75px">364.69</div>
<div class="c r" style="left:915.5px;top:273.82px;width:57.25px">2045323</div>
<div class="c r" style="left:975.75px;top:273.82px;width:57px">1768017</div>
<div class="c r" style="left:1035.75px;top:273.82px;width:56.75px">277305.6</div>
<div class="c" style="left:27px;top:291.96px;width:161.75px">Europe</div>
<div class="c" style="left:191.25px;top:291.96px;width:77.5px">Moldova</div>
<div class="c" style="left:271.25px;top:291.96px;width:91.25px">Meat</div>
<div class="c" style="left:365px;top:291.96px;width:57.5px">Online</div>
<div class="c" style="left:425px;top:291.96px;width:57.5px">L</div>
<div class="c" style="left:485px;top:291.96px;width:77px">2/28/2012</div>
<div class="c r" style="left:562px;top:291.96px;width:85.5px">459845054</div>
<div class="c" style="left:653px;top:291.96px;width:82.75px">3/20/2012</div>
<div class="c r" style="left:735.75px;top:291.96px;width:57px">7225</div>
<div class="c r" style="left:795.75px;top:291.96px;width:57px">421.89</div>
<div class="c r" style="left:855.75px;top:291.96px;width:56.75px">364.69</div>
<div class="c r" style="left:915.5px;top:291.96px;width:57.25px">3048155</div>
<div class="c r" style="left:975.75px;top:291.96px;width:57px">2634885</div>
<div class="c r" style="left:1035.75px;top:291.96px;width:56.75px">413270</div>
<div class="c" style="left:27px;top:310.1px;width:161.75px">Europe</div>
<div class="c" style="left:191.25px;top:310.1px;width:77.5px">Malta</div>
<div class="c" style="left:271.25px;top:310.1px;width:91.25px">Cereal</div>
<div class="c" style="left:365px;top:310.1px;width:57.5px">Online</div>
<div class="c" style="left:425px;top:310.1px;width:57.5px">M</div>
<div class="c" style="left:485px;top:310.1px;width:77px">08/12/2010</div>
<div class="c r" style="left:562px;top:310.1px;width:85.5px">626391351</div>
<div class="c" style="left:653px;top:310.1px;width:82.75px">9/13/2010</div>
<div class="c r" style="left:735.75px;top:310.1px;width:57px">1975</div>
<div class="c r" style="left:795.75px;top:310.1px;width:57px">205.7</div>
<div class="c r" style="left:855.75px;top:310.1px;width:56.75px">117.11</div>
<div class="c r" style="left:915.5px;top:310.1px;width:57.25px">406257.5</div>
<div class="c r" style="left:975.75px;top:310.1px;width:57px">231292.3</div>
<div class="c r" style="left:1035.75px;top:310.1px;width:56.75px">174965.3</div>
<div class="c" style="left:27px;top:328.24px;width:161.75px">Asia</div>
<div class="c" style="left:191.25px;top:328.24px;width:77.5px">Indonesia</div>
<div class="c" style="left:271.25px;top:328.24px;width:91.25px">Meat</div>
<div class="c" style="left:365px;top:328.24px;width:57.5px">Online</div>
<div class="c" style="left:425px;top:328.24px;width:57.5px">H</div>
<div class="c" style="left:485px;top:328.24px;width:77px">8/20/2010</div>
<div class="c r" style="left:562px;top:328.24px;width:85.5px">472974574</div>
<div class="c" style="left:653px;top:328.24px;width:82.75px">8/27/2010</div>
<div class="c r" style="left:735.75px;top:328.24px;width:57px">2542</div>
<div class="c r" style="left:795.75px;top:328.24px;width:57px">421.89</div>
<div class="c r" style="left:855.75px;top:328.24px;width:56.75px">364.69</div>
<div class="c r" style="left:915.5px;top:328.24px;width:57.25px">1072444</div>
<div class="c r" style="left:975.75px;top:328.24px;width:57px">927042</div>
<div class="c r" style="left:1035.75px;top:328.24px;width:56.75px">145402.4</div>
<div class="c" style="left:27px;top:346.38px;width:161.75px">Sub-Saharan Africa</div>
<div class="c" style="left:191.25px;top:346.38px;width:77.5px">Djibouti</div>
<div class="c" style="left:271.25px;top:346.38px;width:91.25px">Household</div>
<div class="c" style="left:365px;top:346.38px;width:57.5px">Online</div>
<div class="c" style="left:425px;top:346.38px;width:57.5px">M</div>
<div class="c" style="left:485px;top:346.38px;width:77px">02/03/2011</div>
<div class="c r" style="left:562px;top:346.38px;width:85.5px">854331052</div>
<div class="c" style="left:653px;top:346.38px;width:82.75px">03/03/2011</div>
<div class="c r" style="left:735.75px;top:346.38px;width:57px">4398</div>
<div class="c r" style="left:795.75px;top:346.38px;width:57px">668.27</div>
<div class="c r" style="left:855.75px;top:346.38px;width:56.75px">502.54</div>
<div class="c r" style="left:915.5px;top:346.38px;width:57.25px">2939051</div>
<div class="c r" style="left:975.75px;top:346.38px;width:57px">2210171</div>
<div class="c r" style="left:1035.75px;top:346.38px;width:56.75px">728880.5</div>
<div class="c" style="left:27px;top:364.52px;width:161.75px">Europe</div>
<div class="c" style="left:191.25px;top:364.52px;width:77.5px">Greece</div>
<div class="c" style="left:271.25px;top:364.52px;width:91.25px">Household</div>
<div class="c" style="left:365px;top:364.52px;width:57.5px">Online</div>
<div class="c" style="left:425px;top:364.52px;width:57.5px">L</div>
<div class="c" style="left:485px;top:364.52px;width:77px">09/11/2015</div>
<div class="c r" style="left:562px;top:364.52px;width:85.5px">895509612</div>
<div class="c" style="left:653px;top:364.52px;width:82.75px">9/26/2015</div>
<div class="c r" style="left:735.75px;top:364.52px;width:57px">49</div>
<div class="c r" style="left:795.75px;top:364.52px;width:57px">668.27</div>
<div class="c r" style="left:855.75px;top:364.52px;width:56.75px">502.54</div>
<div class="c r" style="left:915.5px;top:364.52px;width:57.25px">32745.23</div>
<div class="c r" style="left:975.75px;top:364.52px;width:57px">24624.46</div>
<div class="c r" style="left:1035.75px;top:364.52px;width:56.75px">8120.77</div>
<div class="c" style="left:27px;top:382.66px;width:161.75px">Sub-Saharan Africa</div>
<div class="c" style="left:191.25px;top:382.66px;width:77.5px">Cameroon</div>
<div class="c" style="left:271.25px;top:382.66px;width:91.25px">Cosmetics</div>
<div class="c" style="left:365px;top:382.66px;width:57.5px">Offline</div>
<div class="c" style="left:425px;top:382.66px;width:57.5px">M</div>
<div class="c" style="left:485px;top:382.66px;width:77px">1/31/2014</div>
<div class="c r" style="left:562px;top:382.66px;width:85.5px">241871583</div>
<div class="c" style="left:653px;top:382.66px;width:82.75px">02/04/2014</div>
<div class="c r" style="left:735.75px;top:382.66px;width:57px">4031</div>
<div class="c r" style="left:795.75px;top:382.66px;width:57px">437.2</div>
<div class="c r" style="left:855.75px;top:382.66px;width:56.75px">263.33</div>
<div class="c r" style="left:915.5px;top:382.66px;width:57.25px">1762353</div>
<div class="c r" style="left:975.75px;top:382.66px;width:57px">1061483</div>
<div class="c r" style="left:1035.75px;top:382.66px;width:56.75px">700870</div>
<div class="c" style="left:27px;top:400.8px;width:161.75px">Sub-Saharan Africa</div>
<div class="c" style="left:191.25px;top:400.8px;width:77.5px">Nigeria</div>
<div class="c" style="left:271.25px;top:400.8px;width:91.25px">Cosmetics</div>
<div class="c" style="left:365px;top:400.8px;width:57.5px">Online</div>
<div class="c" style="left:425px;top:400.8px;width:57.5px">C</div>
<div class="c" style="left:485px;top:400.8px;width:77px">11/21/2015</div>
<div class="c r" style="left:562px;top:400.8px;width:85.5px">409090793</div>
<div class="c" style="left:653px;top:400.8px;width:82.75px">12/07/2015</div>
<div class="c r" style="left:735.75px;top:400.8px;width:57px">7911</div>
<div class="c r" style="left:795.75px;top:400.8px;width:57px">437.2</div>
<div class="c r" style="left:855.75px;top:400.8px;width:56.75px">263.33</div>
<div class="c r" style="left:915.5px;top:400.8px;width:57.25px">3458689</div>
<div class="c r" style="left:975.75px;top:400.8px;width:57px">2083204</div>
<div class="c r" style="left:1035.75px;top:400.8px;width:56.75px">1375486</div>
<div class="c" style="left:27px;top:418.94px;width:161.75px">Sub-Saharan Africa</div>
<div class="c" style="left:191.25px;top:418.94px;width:77.5px">Senegal</div>
<div class="c" style="left:271.25px;top:418.94px;width:91.25px">Fruits</div>
<div class="c" style="left:365px;top:418.94px;width:57.5px">Offline</div>
<div class="c" style="left:425px;top:418.94px;width:57.5px">M</div>
<div class="c" style="left:485px;top:418.94px;width:77px">8/29/2016</div>
<div class="c r" style="left:562px;top:418.94px;width:85.5px">733153569</div>
<div class="c" style="left:653px;top:418.94px;width:82.75px">10/05/2016</div>
<div class="c r" style="left:735.75px;top:418.94px;width:57px">5288</div>
<div class="c r" style="left:795.75px;top:418.94px;width:57px">9.33</div>
<div class="c r" style="left:855.75px;top:418.94px;width:56.75px">6.92</div>
<div class="c r" style="left:915.5px;top:418.94px;width:57.25px">49337.04</div>
<div class="c r" style="left:975.75px;top:418.94px;width:57px">36592.96</div>
<div class="c r" style="left:1035.75px;top:418.94px;width:56.75px">12744.08</div>
<div class="c" style="left:27px;top:437.08px;width:161.75px">Middle East and North Africa</div>
<div class="c" style="left:191.25px;top:437.08px;width:77.5px">Afghanistan</div>
<div class="c" style="left:271.25px;top:437.08px;width:91.25px">Cosmetics</div>
<div class="c" style="left:365px;top:437.08px;width:57.5px">Offline</div>
<div class="c" style="left:425px;top:437.08px;width:57.5px">L</div>
<div class="c" style="left:485px;top:437.08px;width:77px">10/21/2016</div>
<div class="c r" style="left:562px;top:437.08px;width:85.5px">620358741</div>
<div class="c" style="left:653px;top:437.08px;width:82.75px">12/01/2016</div>
<div class="c r" style="left:735.75px;top:437.08px;width:57px">6792</div>
<div class="c r" style="left:795.75px;top:437.08px;width:57px">437.2</div>
<div class="c r" style="left:855.75px;top:437.08px;width:56.75px">263.33</div>
<div class="c r" style="left:915.5px;top:437.08px;width:57.25px">2969462</div>
<div class="c r" style="left:975.75px;top:437.08px;width:57px">1788537</div>
<div class="c r" style="left:1035.75px;top:437.08px;width:56.75px">1180925</div>
<div class="c" style="left:27px;top:455.22px;width:161.75px">Asia</div>
<div class="c" style="left:191.25px;top:455.22px;width:77.5px">India</div>
<div class="c" style="left:271.25px;top:455.22px;width:91.25px">Vegetables</div>
<div class="c" style="left:365px;top:455.22px;width:57.5px">Online</div>
<div class="c" style="left:425px;top:455.22px;width:57.5px">C</div>
<div class="c" style="left:485px;top:455.22px;width:77px">3/21/2010</div>
<div class="c r" style="left:562px;top:455.22px;width:85.5px">897317636</div>
<div class="c" style="left:653px;top:455.22px;width:82.75px">04/05/2010</div>
<div class="c r" style="left:735.75px;top:455.22px;width:57px">5084</div>
<div class="c r" style="left:795.75px;top:455.22px;width:57px">154.06</div>
<div class="c r" style="left:855.75px;top:455.22px;width:56.75px">90.93</div>
<div class="c r" style="left:915.5px;top:455.22px;width:57.25px">783241</div>
<div class="c r" style="left:975.75px;top:455.22px;width:57px">462288.1</div>
<div class="c r" style="left:1035.75px;top:455.22px;width:56.75px">320952.9</div>
<div class="c" style="left:27px;top:473.36px;width:161.75px">Middle East and North Africa</div>
<div class="c" style="left:191.25px;top:473.36px;width:77.5px">Lebanon</div>
<div class="c" style="left:271.25px;top:473.36px;width:91.25px">Vegetables</div>
<div class="c" style="left:365px;top:473.36px;width:57.5px">Online</div>
<div class="c" style="left:425px;top:473.36px;width:57.5px">L</div>
<div class="c" style="left:485px;top:473.36px;width:77px">10/15/2010</div>
<div class="c r" style="left:562px;top:473.36px;width:85.5px">660954082</div>
<div class="c" style="left:653px;top:473.36px;width:82.75px">11/19/2010</div>
<div class="c r" style="left:735.75px;top:473.36px;width:57px">9855</div>
<div class="c r" style="left:795.75px;top:473.36px;width:57px">154.06</div>
<div class="c r" style="left:855.75px;top:473.36px;width:56.75px">90.93</div>
<div class="c r" style="left:915.5px;top:473.36px;width:57.25px">1518261</div>
<div class="c r" style="left:975.75px;top:473.36px;width:57px">896115.2</div>
<div class="c r" style="left:1035.75px;top:473.36px;width:56.75px">622146.2</div>
<div class="c" style="left:27px;top:491.5px;width:161.75px">Middle East and North Africa</div>
<div class="c" style="left:191.25px;top:491.5px;width:77.5px">Turkey</div>
<div class="c" style="left:271.25px;top:491.5px;width:91.25px">Office Supplies</div>
<div class="c" style="left:365px;top:491.5px;width:57.5px">Online</div>
<div class="c" style="left:425px;top:491.5px;width:57.5px">L</div>
<div class="c" style="left:485px;top:491.5px;width:77px">10/04/2010</div>
<div class="c r" style="left:562px;top:491.5px;width:85.5px">428504407</div>
<div class="c" style="left:653px;top:491.5px;width:82.75px">11/13/2010</div>
<div class="c r" style="left:735.75px;top:491.5px;width:57px">2831</div>
<div class="c r" style="left:795.75px;top:491.5px;width:57px">651.21</div>
<div class="c r" style="left:855.75px;top:491.5px;width:56.75px">524.96</div>
<div class="c r" style="left:915.5px;top:491.5px;width:57.25px">1843576</div>
<div class="c r" style="left:975.75px;top:491.5px;width:57px">1486162</div>
<div class="c r" style="left:1035.75px;top:491.5px;width:56.75px">357413.8</div>
<div class="c" style="left:27px;top:509.64px;width:161.75px">Middle East and North Africa</div>
<div class="c" style="left:191.25px;top:509.64px;width:77.5px">Iraq</div>
<div class="c" style="left:271.25px;top:509.64px;width:91.25px">Cosmetics</div>
<div class="c" style="left:365px;top:509.64px;width:57.5px">Offline</div>
<div class="c" style="left:425px;top:509.64px;width:57.5px">M</div>
<div class="c" style="left:485px;top:509.64px;width:77px">10/14/2014</div>
<div class="c r" style="left:562px;top:509.64px;width:85.5px">787517440</div>
<div class="c" style="left:653px;top:509.64px;width:82.75px">10/19/2014</div>
<div class="c r" style="left:735.75px;top:509.64px;width:57px">2766</div>
<div class="c r" style="left:795.75px;top:509.64px;width:57px">437.2</div>
<div class="c r" style="left:855.75px;top:509.64px;width:56.75px">263.33</div>
<div class="c r" style="left:915.5px;top:509.64px;width:57.25px">1209295</div>
<div class="c r" style="left:975.75px;top:509.64px;width:57px">728370.8</div>
<div class="c r" style="left:1035.75px;top:509.64px;width:56.75px">480924.4</div>
<div class="c" style="left:27px;top:527.78px;width:161.75px">Sub-Saharan Africa</div>
<div class="c" style="left:191.25px;top:527.78px;width:77.5px">Rwanda</div>
<div class="c" style="left:271.25px;top:527.78px;width:91.25px">Personal Care</div>
<div class="c" style="left:365px;top:527.78px;width:57.5px">Offline</div>
<div class="c" style="left:425px;top:527.78px;width:57.5px">M</div>
<div class="c" style="left:485px;top:527.78px;width:77px">6/15/2013</div>
<div class="c r" style="left:562px;top:527.78px;width:85.5px">145854508</div>
<div class="c" style="left:653px;top:527.78px;width:82.75px">07/08/2013</div>
<div class="c r" style="left:735.75px;top:527.78px;width:57px">445</div>
<div class="c r" style="left:795.75px;top:527.78px;width:57px">81.73</div>
<div class="c r" style="left:855.75px;top:527.78px;width:56.75px">56.67</div>
<div class="c r" style="left:915.5px;top:527.78px;width:57.25px">36369.85</div>
<div class="c r" style="left:975.75px;top:527.78px;width:57px">25218.15</div>
<div class="c r" style="left:1035.75px;top:527.78px;width:56.75px">11151.7</div>
<div class="c" style="left:27px;top:545.92px;width:161.75px">Europe</div>
<div class="c" style="left:191.25px;top:545.92px;width:77.5px">Ukraine</div>
<div class="c" style="left:271.25px;top:545.92px;width:91.25px">Baby Food</div>
<div class="c" style="left:365px;top:545.92px;width:57.5px">Offline</div>
<div class="c" style="left:425px;top:545.92px;width:57.5px">M</div>
<div class="c" style="left:485px;top:545.92px;width:77px">05/07/2017</div>
<div class="c r" style="left:562px;top:545.92px;width:85.5px">581689441</div>
<div class="c" style="left:653px;top:545.92px;width:82.75px">5/29/2017</div>
<div class="c r" style="left:735.75px;top:545.92px;width:57px">3687</div>
<div class="c r" style="left:795.75px;top:545.92px;width:57px">255.28</div>
<div class="c r" style="left:855.75px;top:545.92px;width:56.75px">159.42</div>
<div class="c r" style="left:915.5px;top:545.92px;width:57.25px">941217.4</div>
<div class="c r" style="left:975.75px;top:545.92px;width:57px">587781.5</div>
<div class="c r" style="left:1035.75px;top:545.92px;width:56.75px">353435.8</div>
<div class="c" style="left:27px;top:564.06px;width:161.75px">Europe</div>
<div class="c" style="left:191.25px;top:564.06px;width:77.5px">Finland</div>
<div class="c" style="left:271.25px;top:564.06px;width:91.25px">Office Supplies</div>
<div class="c" style="left:365px;top:564.06px;width:57.5px">Online</div>
<div class="c" style="left:425px;top:564.06px;width:57.5px">H</div>
<div class="c" style="left:485px;top:564.06px;width:77px">5/21/2015</div>
<div class="c r" style="left:562px;top:564.06px;width:85.5px">193508565</div>
<div class="c" style="left:653px;top:564.06px;width:82.75px">07/03/2015</div>
<div class="c r" style="left:735.75px;top:564.06px;width:57px">2339</div>
<div class="c r" style="left:795.75px;top:564.06px;width:57px">651.21</div>
<div class="c r" style="left:855.75px;top:564.06px;width:56.75px">524.96</div>
<div class="c r" style="left:915.5px;top:564.06px;width:57.25px">1523180</div>
<div class="c r" style="left:975.75px;top:564.06px;width:57px">1227881</div>
<div class="c r" style="left:1035.75px;top:564.06px;width:56.75px">295298.8</div>
<div class="c" style="left:27px;top:582.2px;width:161.75px">Sub-Saharan Africa</div>
<div class="c" style="left:191.25px;top:582.2px;width:77.5px">South Sudan</div>
<div class="c" style="left:271.25px;top:582.2px;width:91.25px">Beverages</div>
<div class="c" style="left:365px;top:582.2px;width:57.5px">Offline</div>
<div class="c" style="left:425px;top:582.2px;width:57.5px">H</div>
<div class="c" style="left:485px;top:582.2px;width:77px">6/28/2016</div>
<div class="c r" style="left:562px;top:582.2px;width:85.5px">750110709</div>
<div class="c" style="left:653px;top:582.2px;width:82.75px">7/14/2016</div>
<div class="c r" style="left:735.75px;top:582.2px;width:57px">3283</div>
<div class="c r" style="left:795.75px;top:582.2px;width:57px">47.45</div>
<div class="c r" style="left:855.75px;top:582.2px;width:56.75px">31.79</div>
<div class="c r" style="left:915.5px;top:582.2px;width:57.25px">155778.4</div>
<div class="c r" style="left:975.75px;top:582.2px;width:57px">104366.6</div>
<div class="c r" style="left:1035.75px;top:582.2px;width:56.75px">51411.78</div>
<div class="c" style="left:27px;top:600.34px;width:161.75px">Central America and the Caribbean</div>
<div class="c" style="left:191.25px;top:600.34px;width:77.5px">Antigua and Barbuda</div>
<div class="c" style="left:271.25px;top:600.34px;width:91.25px">Fruits</div>
<div class="c" style="left:365px;top:600.34px;width:57.5px">Offline</div>
<div class="c" style="left:425px;top:600.34px;width:57.5px">M</div>
<div class="c" style="left:485px;top:600.34px;width:77px">07/06/2015</div>
<div class="c r" style="left:562px;top:600.34px;width:85.5px">940607202</div>
<div class="c" style="left:653px;top:600.34px;width:82.75px">08/12/2015</div>
<div class="c r" style="left:735.75px;top:600.34px;width:57px">5428</div>
<div class="c r" style="left:795.75px;top:600.34px;width:57px">9.33</div>
<div class="c r" style="left:855.75px;top:600.34px;width:56.75px">6.92</div>
<div class="c r" style="left:915.5px;top:600.34px;width:57.25px">50643.24</div>
<div class="c r" style="left:975.75px;top:600.34px;width:57px">37561.76</div>
<div class="c r" style="left:1035.75px;top:600.34px;width:56.75px">13081.48</div>
<div class="c" style="left:27px;top:618.48px;width:161.75px">Europe</div>
<div class="c" style="left:191.25px;top:618.48px;width:77.5px">Mauritius</div>
<div class="c" style="left:271.25px;top:618.48px;width:91.25px">Office Supplies</div>
<div class="c" style="left:365px;top:618.48px;width:57.5px">Online</div>
<div class="c" style="left:425px;top:618.48px;width:57.5px">H</div>
<div class="c" style="left:485px;top:618.48px;width:77px">11/12/2010</div>
<div class="c r" style="left:562px;top:618.48px;width:85.5px">870060990</div>
<div class="c" style="left:653px;top:618.48px;width:82.75px">12/04/2010</div>
<div class="c r" style="left:735.75px;top:618.48px;width:57px">5000</div>
<div class="c r" style="left:795.75px;top:618.48px;width:57px">651.21</div>
<div class="c r" style="left:855.75px;top:618.48px;width:56.75px">524.96</div>
<div class="c r" style="left:915.5px;top:618.48px;width:57.25px">3256050</div>
<div class="c r" style="left:975.75px;top:618.48px;width:57px">2624800</div>
<div class="c r" style="left:1035.75px;top:618.48px;width:56.75px">631250</div>
<div class="ch" style="left:24.5px;width:164.25px">A</div>
<div class="ch" style="left:188.75px;width:80px">B</div>
<div class="ch" style="left:268.75px;width:93.75px">C</div>
<div class="ch" style="left:362.5px;width:60px">D</div>
<div class="ch" style="left:422.5px;width:60px">E</div>
<div class="ch" style="left:482.5px;width:79.5px">F</div>
<div class="ch" style="left:562px;width:88.5px">G</div>
<div class="ch" style="left:650.5px;width:85.25px">H</div>
<div class="ch" style="left:735.75px;width:60px">I</div>
<div class="ch" style="left:795.75px;width:60px">J</div>
<div class="ch" style="left:855.75px;width:59.75px">K</div>
<div class="ch" style="left:915.5px;width:60.25px">L</div>
<div class="ch" style="left:975.75px;width:60px">M</div>
<div class="ch" style="left:1035.75px;width:59.75px">N</div>
<div class="ch sel" style="left:1095.5px;width:60.3px">O</div>
<div class="a" style="left:0;top:201px;width:24.5px;height:18.5px;background:#525254"></div>
<svg class="a" style="left:10px;top:205px" width="13" height="13" viewBox="0 0 13 13"><path d="M12.5 0 V12.5 H0 Z" fill="#dcdcdc"/></svg>
<div class="a" style="left:23.5px;top:202px;width:1px;height:17.5px;background:#8a8a8c"></div>
<div class="rh sel" style="top:219.4px">1</div>
<div class="rh" style="top:237.54px">2</div>
<div class="rh" style="top:255.68px">3</div>
<div class="rh" style="top:273.82px">4</div>
<div class="rh" style="top:291.96px">5</div>
<div class="rh" style="top:310.1px">6</div>
<div class="rh" style="top:328.24px">7</div>
<div class="rh" style="top:346.38px">8</div>
<div class="rh" style="top:364.52px">9</div>
<div class="rh" style="top:382.66px">10</div>
<div class="rh" style="top:400.8px">11</div>
<div class="rh" style="top:418.94px">12</div>
<div class="rh" style="top:437.08px">13</div>
<div class="rh" style="top:455.22px">14</div>
<div class="rh" style="top:473.36px">15</div>
<div class="rh" style="top:491.5px">16</div>
<div class="rh" style="top:509.64px">17</div>
<div class="rh" style="top:527.78px">18</div>
<div class="rh" style="top:545.92px">19</div>
<div class="rh" style="top:564.06px">20</div>
<div class="rh" style="top:582.2px">21</div>
<div class="rh" style="top:600.34px">22</div>
<!-- selection -->
<div class="a" style="left:1094.5px;top:218.6px;width:62px;height:20.2px;border:1.6px solid #2a7a56"></div>
<div class="a" style="left:1152.5px;top:235.5px;width:4.5px;height:4px;background:#2a7a56"></div>
<div class="a" style="left:1153.5px;top:202px;width:1.5px;height:17px;background:#8c8c8c"></div>

<!-- vertical scrollbar -->
<div class="a" style="left:1181px;top:196px;width:19px;height:430px;background:#4a4a4c"></div>
<div class="a" style="left:1183px;top:202px;width:15px;height:422px;background:#38383a;border-radius:8px"></div>
<svg class="a" style="left:1185px;top:206px" width="11" height="8" viewBox="0 0 11 8"><path d="M5.5 0.5 L10.5 7.5 H0.5 Z" fill="#d8d8d8"/></svg>
<div class="a" style="left:1187px;top:218px;width:7.5px;height:83px;background:#c8c8c8;border-radius:4px"></div>
<svg class="a" style="left:1185.5px;top:614px" width="11" height="8" viewBox="0 0 11 8"><path d="M5.5 7.5 L10.5 0.5 H0.5 Z" fill="#d8d8d8"/></svg>

<!-- sheet tabs bar -->
<div class="a" style="left:0;top:618.5px;width:24.5px;height:6px;background:#4e5058"></div>
<div class="a" style="left:24.5px;top:622px;width:160px;height:6px;background:#fff"></div>
<div class="a" style="left:0;top:624px;width:103.5px;height:30px;background:#4e5058;border-top-right-radius:4px"></div>
<div class="a" style="left:158px;top:624px;width:1042px;height:30px;background:#4e5058;border-top-left-radius:4px"></div>
<div class="a" style="left:103px;top:628px;width:56px;height:26px;background:#4e5058"></div>
<svg class="a" style="left:21px;top:633px" width="7" height="11" viewBox="0 0 7 11" fill="none" stroke="#9a9a9c" stroke-width="1.1"><path d="M6 0.5 L1 5.5 L6 10.5"/></svg>
<svg class="a" style="left:52px;top:633px" width="7" height="11" viewBox="0 0 7 11" fill="none" stroke="#9a9a9c" stroke-width="1.1"><path d="M1 0.5 L6 5.5 L1 10.5"/></svg>
<div class="a" style="left:104px;top:624px;width:54px;height:25.5px;background:#fff;border-radius:0 0 5px 5px"></div>
<div class="t" style="left:111.5px;top:631px;font-size:12px;color:#1a1a1a;-webkit-text-stroke:0.2px #1a1a1a">Sheet1</div>
<div class="a" style="left:111.5px;top:645px;width:38.5px;height:2px;background:#1e7145"></div>
<div class="a" style="left:162px;top:631px;width:1px;height:15px;background:#6c6c6e"></div>
<div class="t wt" style="left:173.7px;top:634.5px;font-size:12.3px">Sheet2</div>
<div class="a" style="left:225px;top:631px;width:1px;height:15px;background:#6c6c6e"></div>
<svg class="a" style="left:264px;top:633px" width="12" height="12" viewBox="0 0 12 12" fill="none" stroke="#d0d0d0" stroke-width="1.1"><path d="M6 0.5 V11.5 M0.5 6 H11.5"/></svg>
<div class="a" style="left:722px;top:634px;width:2px;height:2px;background:#dcdcdc"></div>
<div class="a" style="left:722px;top:638px;width:2px;height:2px;background:#dcdcdc"></div>
<div class="a" style="left:722px;top:642px;width:2px;height:2px;background:#dcdcdc"></div>
<div class="a" style="left:738.5px;top:630px;width:441px;height:15.5px;background:#38383a;border-radius:8px"></div>
<svg class="a" style="left:742px;top:634px" width="8" height="9" viewBox="0 0 8 9"><path d="M0.5 4.5 L7.5 0.5 V8.5 Z" fill="#d8d8d8"/></svg>
<div class="a" style="left:753.5px;top:634px;width:400px;height:8px;background:#c8c8c8;border-radius:4px"></div>
<svg class="a" style="left:1167px;top:634px" width="8" height="9" viewBox="0 0 8 9"><path d="M7.5 4.5 L0.5 0.5 V8.5 Z" fill="#d8d8d8"/></svg>

<!-- status bar -->
<div class="a" style="left:0;top:653px;width:1200px;height:1px;background:#3e3e40"></div>
<div class="a" style="left:0;top:654px;width:1200px;height:19px;background:#525252"></div>
<div class="a" style="left:0;top:673px;width:1200px;height:2px;background:#dedede"></div>
<div class="t" style="left:10.5px;top:659.5px;font-size:9.6px;color:#eeeeee;-webkit-text-stroke:0.15px #eee">Ready</div>
<svg class="a" style="left:54px;top:656px" width="16" height="17" viewBox="54 656 16 17" fill="none" stroke="#ececec" stroke-width="1.1">
  <circle cx="61" cy="659" r="1.6"/>
  <path d="M55.6 660.3 C56.5 662.6 58.5 662.4 59.3 662.4 H62.7 C63.5 662.4 65.5 662.6 66.4 660.3"/>
  <path d="M59.3 662.4 V665.5 C58.3 667 57.3 668.5 57.6 670 C58 671 59.2 670.8 59.6 669.6 L60.4 667.8"/>
  <path d="M62.7 662.4 V665.2"/>
  <path d="M63.2 666.3 L67.6 670.8 M67.6 666.3 L63.2 670.8"/>
</svg>
<div class="t" style="left:72px;top:659.5px;font-size:9.8px;color:#f0f0f0;font-weight:bold">Accessibility: Investigate</div>
<div class="a" style="left:925px;top:654px;width:34px;height:19px;background:#5a5a5c"></div>
<svg class="a" style="left:932px;top:657px" width="14" height="13" viewBox="0 0 14 13" fill="none" stroke="#e8e8e8" stroke-width="1.2"><rect x="1" y="1" width="12" height="11"/><path d="M5 1 V12 M9 1 V12 M1 4.7 H13 M1 8.3 H13"/></svg>
<svg class="a" style="left:970px;top:657px" width="14" height="13" viewBox="0 0 14 13" fill="none" stroke="#e8e8e8" stroke-width="1.1"><rect x="1" y="1" width="12" height="11"/><rect x="4" y="3" width="6" height="7"/><path d="M5.5 5 H8.5 M5.5 7 H8.5"/></svg>
<svg class="a" style="left:1008px;top:657px" width="14" height="13" viewBox="0 0 14 13" fill="none" stroke="#e8e8e8" stroke-width="1.1"><path d="M1 1 H13 V12 H1 Z M1 8 H7 V1 M4 1 V8"/></svg>
<div class="a" style="left:1038.5px;top:663.5px;width:7px;height:1px;background:#bdbdbd"></div>
<div class="a" style="left:1052px;top:663.5px;width:92px;height:1px;background:#d4d4d4"></div>
<div class="a" style="left:1095px;top:659px;width:5px;height:10.5px;background:#d4d4d4"></div>
<svg class="a" style="left:1148px;top:660px" width="8" height="8" viewBox="0 0 8 8" fill="none" stroke="#d4d4d4" stroke-width="1"><path d="M4 0 V8 M0 4 H8"/></svg>
<div class="t" style="left:1168px;top:659.5px;font-size:9.6px;color:#e0e0e0">100%</div>

<!-- MUO watermark -->
<svg class="a" style="left:1060px;top:590px" width="125" height="65" viewBox="1060 590 125 65">
  <path d="M1086 594.7 H1176.7 Q1178.7 594.7 1178.7 596.7 V629 L1152 651.7 H1064.2 V617.5 Z" fill="rgb(210,34,18)" fill-opacity="0.56"/>
  <path d="M1165 651.7 L1178.7 637 V651.7 Z" fill="rgb(210,34,18)" fill-opacity="0.7"/>
  <g fill="none" stroke="#e2e2e2" stroke-width="2.8" stroke-linejoin="miter">
    <path d="M1088.6 633.6 V613.5 L1099 625.8 L1109 613.5 V633.6" stroke-linejoin="bevel"/>
    <path d="M1112.9 612.8 V632 H1131 V612.8"/>
    <path d="M1135.3 614.2 H1153.2 V632 H1135.3 Z"/>
  </g>
</svg>
</body></html>
